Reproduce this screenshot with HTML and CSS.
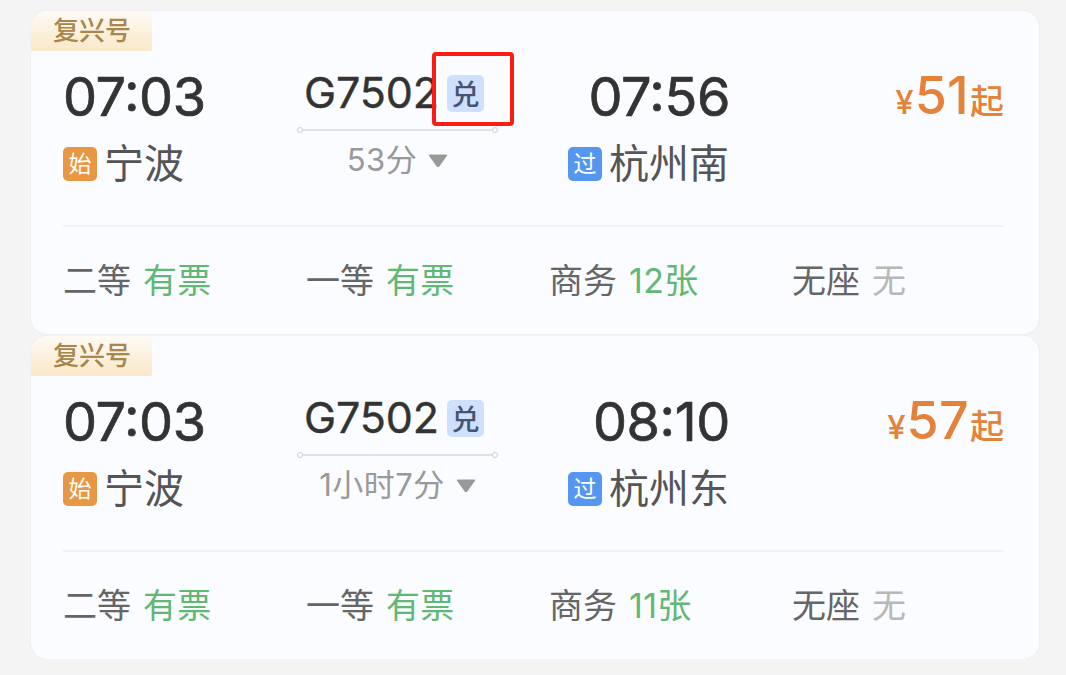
FILE: index.html
```html
<!DOCTYPE html>
<html lang="zh-CN">
<head>
  <meta charset="UTF-8">
  <title>车次列表</title>
  <meta name="viewport" content="width=device-width, initial-scale=1">
  <link rel="stylesheet" href="styles.css">
</head>
<body>
  <div class="list">
    <div class="card">
      <div class="tag">复兴号</div>
      <div class="trip">
        <div class="from">
          <div class="time">07:03</div>
          <div class="station"><span class="badge start">始</span>宁波</div>
        </div>
        <div class="middle">
          <div class="train">G7502<span class="exchange">兑<span class="mark"></span></span></div>
          <div class="line"></div>
          <div class="duration"><span>53分</span><svg class="arrow" viewBox="0 0 20 14"><path d="M1.5 0.5h17q1.2 0.3.5 1.3l-7.7 10.6q-1.3 1.3-2.6 0L1 1.8Q.3.8 1.5.5z"/></svg></div>
        </div>
        <div class="to">
          <div class="time">07:56</div>
          <div class="station"><span class="badge pass">过</span>杭州南</div>
        </div>
        <div class="price"><span class="yen">¥</span><span class="amount">51</span><span class="up">起</span></div>
      </div>
      <div class="seats">
        <div class="seat">二等<span class="ok">有票</span></div>
        <div class="seat">一等<span class="ok">有票</span></div>
        <div class="seat">商务<span class="ok">12张</span></div>
        <div class="seat">无座<span class="none">无</span></div>
      </div>
    </div>
    <div class="card">
      <div class="tag">复兴号</div>
      <div class="trip">
        <div class="from">
          <div class="time">07:03</div>
          <div class="station"><span class="badge start">始</span>宁波</div>
        </div>
        <div class="middle">
          <div class="train">G7502<span class="exchange">兑</span></div>
          <div class="line"></div>
          <div class="duration"><span>1小时7分</span><svg class="arrow" viewBox="0 0 20 14"><path d="M1.5 0.5h17q1.2 0.3.5 1.3l-7.7 10.6q-1.3 1.3-2.6 0L1 1.8Q.3.8 1.5.5z"/></svg></div>
        </div>
        <div class="to">
          <div class="time">08:10</div>
          <div class="station"><span class="badge pass">过</span>杭州东</div>
        </div>
        <div class="price"><span class="yen">¥</span><span class="amount">57</span><span class="up">起</span></div>
      </div>
      <div class="seats">
        <div class="seat">二等<span class="ok">有票</span></div>
        <div class="seat">一等<span class="ok">有票</span></div>
        <div class="seat">商务<span class="ok">11张</span></div>
        <div class="seat">无座<span class="none">无</span></div>
      </div>
    </div>
  </div>
</body>
</html>
```
FILE: styles.css
```css
* { box-sizing: border-box; }
body { margin: 0; background: #f4f4f4; font-family: Inter, "Noto Sans CJK SC", sans-serif; color: #333; overflow: hidden; }
.list { width: 1008px; margin: 11px 0 0 31px; display: flex; flex-direction: column; gap: 2px; }
.card { height: 323px; background: #fbfcff; border-radius: 16px; box-shadow: 0 0 2px #00000012; }
.tag { width: 121px; height: 40px; padding-left: 22px; border-radius: 16px 0 2px 0; background: linear-gradient(#fefaf5, #fae8c8); color: #a8864c; font-size: 26px; font-weight: 500; line-height: 39px; }

.trip { display: grid; grid-template-columns: 234px 201px 232px 1fr; height: 174px; margin: 0 35px 0 32px; }
.time { height: 62px; margin-top: 15px; line-height: 62px; font-size: 54px; font-weight: 400; letter-spacing: -0.4px; font-feature-settings: "case"; -webkit-text-stroke: 0.7px #333; }
.station { display: flex; align-items: center; height: 42px; margin-top: 15px; font-size: 40px; font-weight: 400; line-height: 40px; color: #555; }
.badge { width: 34px; height: 34px; margin-right: 7px; border-radius: 5px; color: #fff; font-size: 23px; font-weight: 400; line-height: 34px; text-align: center; }
.start { background: #e89744; }
.pass { background: #5596ee; }

.middle { display: flex; flex-direction: column; }
.train { display: flex; align-items: center; height: 50px; margin-top: 16px; padding-left: 7px; font-size: 43px; font-weight: 400; letter-spacing: -0.1px; -webkit-text-stroke: 0.4px #333; }
.exchange { position: relative; width: 37px; height: 37px; margin: 2px 0 0 8px; border-radius: 5px; background: #cfe0fe; color: #46556f; font-size: 28px; font-weight: 500; line-height: 41px; text-align: center; letter-spacing: 0; -webkit-text-stroke: 0; }
/* red frame round the exchange badge */
.mark { position: absolute; left: -15px; top: -23px; width: 82px; height: 74px; border: 4px solid #fd1b14; border-radius: 4px; }
.line { position: relative; height: 2px; margin: 12px 5px 0; background: #e1e2e4; }
.line::before, .line::after { content: ""; position: absolute; top: -2px; width: 6px; height: 6px; border: 1px solid #cdced0; border-radius: 50%; background: #fbfcff; box-sizing: border-box; }
.line::before { left: -5px; }
.line::after { right: -5px; }
.duration { display: flex; align-items: center; justify-content: center; height: 40px; margin-top: 10px; font-size: 31px; font-weight: 400; letter-spacing: 0.5px; line-height: 38px; color: #999; }
.duration span { margin-top: -2px; }
.arrow { width: 20px; height: 14px; margin-left: 11px; fill: #999; }

.to { display: flex; flex-direction: column; align-items: flex-end; }
.to .station { margin-right: 1px; }
.price { display: flex; align-items: baseline; justify-content: flex-end; height: 62px; margin-top: 15px; color: #e58239; font-weight: 500; line-height: 60px; }
.yen { margin-right: 1px; font-size: 33px; }
.amount { margin-right: 1px; font-size: 52px; font-weight: 500; letter-spacing: 0.3px; }
.up { font-size: 34px; }

.seats { display: grid; grid-template-columns: repeat(4, 243px); align-items: center; height: 109px; margin: 0 35px 0 32px; padding-bottom: 4px; border-top: 2px solid #f1f0f2; font-size: 34px; font-weight: 400; color: #666; }
.seat span { margin-left: 12px; }
.ok { color: #61b874; font-weight: 400; letter-spacing: 0.3px; }
.none { color: #b8b8b8; }
```
